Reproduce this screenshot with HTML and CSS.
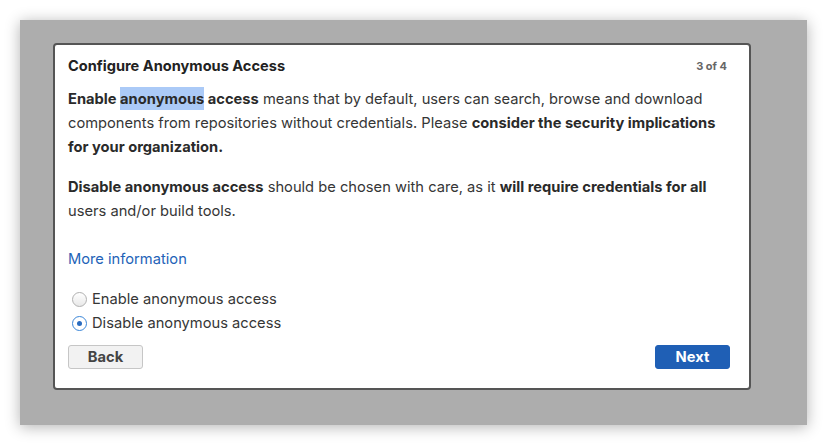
FILE: index.html
```html
<!DOCTYPE html>
<html>
<head>
<meta charset="utf-8">
<link rel="stylesheet" href="styles.css">
</head>
<body>
<div class="stage">
  <div class="backdrop">
    <div class="dialog">
      <div class="header">
        <div class="title">Configure Anonymous Access</div>
        <div class="step">3 of 4</div>
      </div>
      <p class="para"><b>Enable <span class="sel">anonymous</span> access</b> means that by default, users can search, browse and download components from repositories without credentials. Please <b>consider the security implications for your organization.</b></p>
      <p class="para"><b>Disable anonymous access</b> should be chosen with care, as it <b>will require credentials for all</b> users and/or build tools.</p>
      <a class="more" href="#">More information</a>
      <div class="options">
        <label class="option"><span class="radio"></span>Enable anonymous access</label>
        <label class="option"><span class="radio checked"></span>Disable anonymous access</label>
      </div>
      <div class="actions">
        <button class="btn back">Back</button>
        <button class="btn next">Next</button>
      </div>
    </div>
  </div>
</div>
</body>
</html>
```

FILE: styles.css
```css
html, body {
  margin: 0;
  padding: 0;
  background: #ffffff;
}
body {
  font-family: Inter, "Noto Sans", sans-serif;
  color: #363636;
}
.stage {
  padding: 20px;
  width: 827px;
  height: 445px;
  box-sizing: border-box;
}
.backdrop {
  width: 787px;
  height: 405px;
  background: #adadad;
  box-shadow: 0 2px 14px rgba(0, 0, 0, 0.3);
  padding: 23px 0 0 33px;
  box-sizing: border-box;
}
.dialog {
  width: 698px;
  height: 347px;
  box-sizing: border-box;
  background: #ffffff;
  border: 2px solid #555555;
  border-radius: 4px;
  padding: 12px 22px 0 13px;
  display: flex;
  flex-direction: column;
}
.header {
  display: flex;
  justify-content: space-between;
  align-items: center;
  height: 18px;
  margin-bottom: 12px;
}
.title {
  font-size: 14.6px;
  font-weight: 700;
  color: #222222;
}
.step {
  font-size: 11px;
  font-weight: 700;
  color: #666666;
}
.para {
  margin: 0 0 16px 0;
  font-size: 14.7px;
  line-height: 24px;
}
.para b {
  color: #2a2a2a;
}
.sel {
  background: #abcaf7;
  padding: 3px 0 2px 0;
}
.more {
  margin-top: 8px;
  font-size: 14.7px;
  line-height: 24px;
  color: #2463b8;
  text-decoration: none;
  align-self: flex-start;
}
.options {
  margin-top: 16px;
  display: flex;
  flex-direction: column;
}
.option {
  display: flex;
  align-items: center;
  font-size: 14.7px;
  line-height: 24px;
  padding-left: 4px;
}
.radio {
  width: 13px;
  height: 13px;
  border-radius: 50%;
  border: 1px solid #b0b0b0;
  background: linear-gradient(#ffffff, #e8e8e8);
  margin-right: 5px;
  box-sizing: content-box;
  display: flex;
  align-items: center;
  justify-content: center;
}
.radio.checked {
  border-color: #3b86d8;
  background: #ffffff;
}
.radio.checked::after {
  content: "";
  width: 5px;
  height: 5px;
  border-radius: 50%;
  background: #2a6cc0;
}
.actions {
  margin-top: 10px;
  margin-right: -3px;
  display: flex;
  justify-content: space-between;
}
.btn {
  width: 75px;
  height: 24px;
  border-radius: 3px;
  font-family: Inter, "Noto Sans", sans-serif;
  font-size: 14.7px;
  font-weight: 700;
  padding: 0;
}
.back {
  background: #f2f2f2;
  border: 1px solid #c6c6c6;
  color: #444444;
}
.next {
  background: #1f5fb5;
  border: 1px solid #1f5fb5;
  color: #ffffff;
}
```
